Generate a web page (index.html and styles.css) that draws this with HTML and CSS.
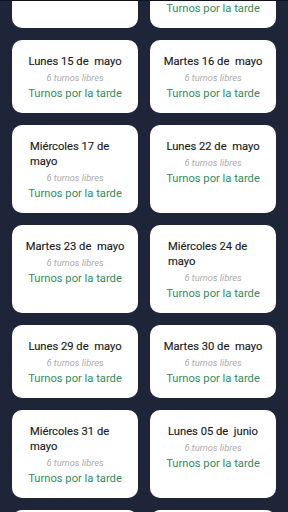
FILE: index.html
```html
<!DOCTYPE html>
<html lang="es">
<head>
<meta charset="utf-8">
<link rel="stylesheet" href="styles.css">
</head>
<body>
<div class="screen">
  <div class="grid">
    <div class="card"><div class="title">Martes 09 de&nbsp; mayo</div><div class="sub">6 turnos libres</div><div class="link">Turnos por la tarde</div></div>
    <div class="card"><div class="title two">Miércoles 10 de mayo</div><div class="sub">6 turnos libres</div><div class="link">Turnos por la tarde</div></div>
    <div class="card"><div class="title">Lunes 15 de&nbsp; mayo</div><div class="sub">6 turnos libres</div><div class="link">Turnos por la tarde</div></div>
    <div class="card"><div class="title">Martes 16 de&nbsp; mayo</div><div class="sub">6 turnos libres</div><div class="link">Turnos por la tarde</div></div>
    <div class="card"><div class="title two">Miércoles 17 de mayo</div><div class="sub">6 turnos libres</div><div class="link">Turnos por la tarde</div></div>
    <div class="card"><div class="title">Lunes 22 de&nbsp; mayo</div><div class="sub">6 turnos libres</div><div class="link">Turnos por la tarde</div></div>
    <div class="card"><div class="title">Martes 23 de&nbsp; mayo</div><div class="sub">6 turnos libres</div><div class="link">Turnos por la tarde</div></div>
    <div class="card"><div class="title two">Miércoles 24 de mayo</div><div class="sub">6 turnos libres</div><div class="link">Turnos por la tarde</div></div>
    <div class="card"><div class="title">Lunes 29 de&nbsp; mayo</div><div class="sub">6 turnos libres</div><div class="link">Turnos por la tarde</div></div>
    <div class="card"><div class="title">Martes 30 de&nbsp; mayo</div><div class="sub">6 turnos libres</div><div class="link">Turnos por la tarde</div></div>
    <div class="card"><div class="title two">Miércoles 31 de mayo</div><div class="sub">6 turnos libres</div><div class="link">Turnos por la tarde</div></div>
    <div class="card"><div class="title">Lunes 05 de&nbsp; junio</div><div class="sub">6 turnos libres</div><div class="link">Turnos por la tarde</div></div>
    <div class="card"><div class="title">Martes 06 de&nbsp; junio</div><div class="sub">6 turnos libres</div><div class="link">Turnos por la tarde</div></div>
    <div class="card"><div class="title two">Miércoles 07 de junio</div><div class="sub">6 turnos libres</div><div class="link">Turnos por la tarde</div></div>
  </div>
</div>
</body>
</html>
```
FILE: styles.css
```css
html, body {
  margin: 0;
  padding: 0;
  background: #1f2538;
}
.screen {
  width: 288px;
  height: 512px;
  overflow: hidden;
  background: #1f2538;
  border-top: 1px solid #10131d;
  box-sizing: border-box;
  font-family: Roboto, "Noto Sans", sans-serif;
}
.grid {
  display: grid;
  grid-template-columns: 126px 126px;
  column-gap: 12px;
  row-gap: 12px;
  padding: 0 12px;
  margin-top: -61px;
}
.card {
  background: #ffffff;
  border-radius: 10px;
  padding: 14px 0 11px;
  display: flex;
  flex-direction: column;
  align-items: center;
}
.title {
  font-size: 11.2px;
  line-height: 15px;
  color: #1c1c1c;
  font-weight: 400;
  white-space: nowrap;
  -webkit-text-stroke: 0.15px #1c1c1c;
}
.title.two {
  white-space: normal;
  width: 90px;
  text-align: left;
}
.sub {
  margin-top: 3px;
  font-size: 9.3px;
  line-height: 12px;
  font-style: italic;
  color: #ababab;
}
.link {
  margin-top: 2px;
  font-size: 11.2px;
  line-height: 16px;
  color: #338c60;
}
```
